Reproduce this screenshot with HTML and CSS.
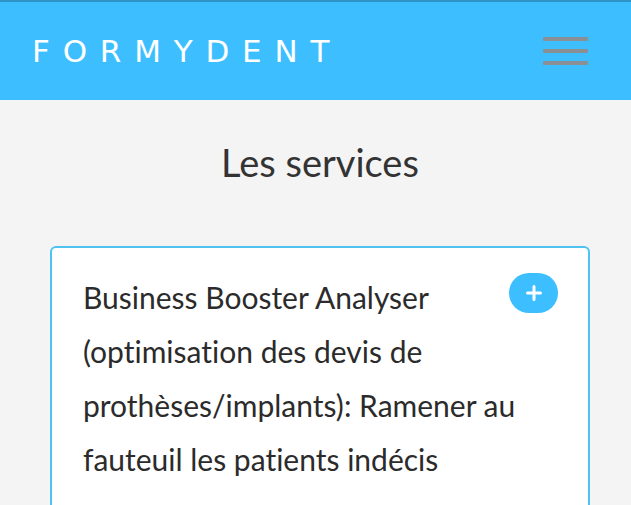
FILE: index.html
```html
<!DOCTYPE html>
<html lang="fr">
<head>
<meta charset="utf-8">
<title>Formydent</title>
<link rel="stylesheet" href="styles.css">
</head>
<body>
<header class="topbar">
  <div class="logo">FORMYDENT</div>
  <button class="burger" aria-label="Menu">
    <span class="bar"></span><span class="bar"></span><span class="bar"></span>
  </button>
</header>
<main class="content">
  <h1 class="title">Les services</h1>
  <section class="card">
    <button class="plus" aria-label="Plus">
      <svg width="16" height="16" viewBox="0 0 16 16"><path d="M8 1.5v13M1.5 8h13" stroke="#fff" stroke-width="3" stroke-linecap="round" fill="none"/></svg>
    </button>
    <p class="card-text">Business Booster Analyser (optimisation des devis de prothèses/implants): Ramener au fauteuil les patients indécis</p>
  </section>
</main>
</body>
</html>
```
FILE: styles.css
```css
html, body {
  margin: 0;
  padding: 0;
}
body {
  background: #f4f4f4;
  font-family: Lato, "Open Sans", sans-serif;
  font-variant-ligatures: none;
  color: #2b2b2b;
  overflow: hidden;
}
.topbar {
  height: 98px;
  border-top: 2px solid #2f93c6;
  background: #3dbfff;
  display: flex;
  align-items: center;
  justify-content: space-between;
  padding: 0 43px 0 32px;
}
.logo {
  color: #ffffff;
  font-family: "DejaVu Sans", sans-serif;
  font-size: 31px;
  letter-spacing: 12.8px;
  font-weight: 400;
}
.burger {
  border: 0;
  background: transparent;
  padding: 0;
  width: 45px;
  display: flex;
  flex-direction: column;
  gap: 8px;
}
.bar {
  display: block;
  height: 4px;
  background: #8a8f94;
  border-radius: 1px;
}
.content {
  padding: 0 41px 0 50px;
}
.title {
  margin: 42px 0 64px;
  text-align: center;
  font-size: 38px;
  font-weight: 400;
  color: #333;
  line-height: 40px;
}
.card {
  background: #fff;
  border: 2px solid #4fc2f2;
  border-radius: 6px;
  padding: 22px 31px 40px 31px;
  min-height: 300px;
}
.plus {
  float: right;
  width: 49px;
  height: 40px;
  margin: 3px -1px 0 20px;
  border: 0;
  border-radius: 20px;
  background: #3dbfff;
  display: flex;
  align-items: center;
  justify-content: center;
  padding: 0;
}
.card-text {
  margin: 0;
  font-size: 30px;
  line-height: 54px;
  color: #2b2b2b;
}
```
